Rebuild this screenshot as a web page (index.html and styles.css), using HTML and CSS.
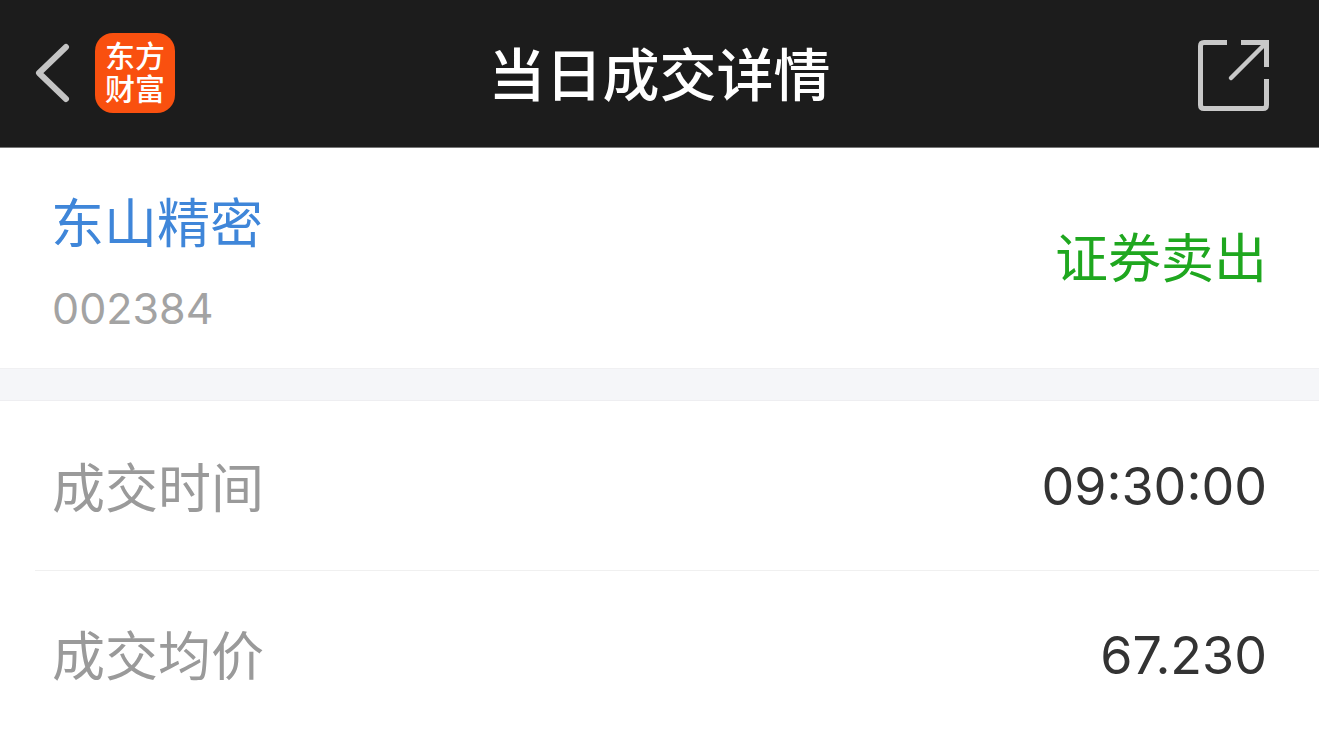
FILE: index.html
```html
<!DOCTYPE html>
<html>
<head>
    <meta charset="UTF-8">
    <meta name="viewport" content="width=device-width, initial-scale=1.0">
    <title>当日成交详情</title>
    <link rel="stylesheet" href="styles.css">
</head>
<body>
    <div class="topbar">
        <div class="topbar-left">
            <svg class="back" width="36" height="60" viewBox="0 0 36 60">
                <path d="M32 4 L5 30 L32 56" fill="none" stroke="#c4c4c4" stroke-width="6" stroke-linecap="round" stroke-linejoin="round"/>
            </svg>
            <div class="logo">
                <span>东方</span>
                <span>财富</span>
            </div>
        </div>
        <div class="title">当日成交详情</div>
        <svg class="share" width="71" height="71" viewBox="0 0 71 71">
            <path d="M29 2.5 H6 Q2.5 2.5 2.5 6 V65 Q2.5 68.5 6 68.5 H65 Q68.5 68.5 68.5 65 V39" fill="none" stroke="#c8c8c8" stroke-width="5"/>
            <path d="M43 2.5 H68.5 V27" fill="none" stroke="#c8c8c8" stroke-width="5"/>
            <path d="M67 4 L33 38" fill="none" stroke="#c8c8c8" stroke-width="4.5" stroke-linecap="round"/>
        </svg>
    </div>

    <div class="stock">
        <div class="stock-info">
            <div class="stock-name">东山精密</div>
            <div class="stock-code">002384</div>
        </div>
        <div class="stock-side">证券卖出</div>
    </div>

    <div class="gap"></div>

    <div class="rows">
        <div class="row">
            <span class="label">成交时间</span>
            <span class="value">09:30:00</span>
        </div>
        <div class="row">
            <span class="label">成交均价</span>
            <span class="value">67.230</span>
        </div>
    </div>
</body>
</html>
```

FILE: styles.css
```css
body {
    margin: 0;
    height: 736px;
    overflow: hidden;
    background: #fff;
    font-family: "Liberation Sans", "Noto Sans CJK SC", sans-serif;
}

.topbar {
    height: 148px;
    background: #1c1c1c;
    border-bottom: 1px solid #777;
    box-sizing: border-box;
    display: flex;
    align-items: center;
    justify-content: space-between;
    padding: 0 50px 2px 34px;
    position: relative;
}

.topbar-left {
    display: flex;
    align-items: center;
    gap: 25px;
}

.share {
    margin-top: 6px;
}

.logo {
    width: 80px;
    height: 80px;
    border-radius: 18px;
    background: #f9500f;
    color: #fff;
    font-size: 30px;
    font-weight: 500;
    line-height: 33px;
    display: flex;
    flex-direction: column;
    align-items: center;
    justify-content: center;
}

.logo span {
    display: block;
}

.title {
    position: absolute;
    left: 0;
    right: 0;
    margin-bottom: 4px;
    text-align: center;
    color: #fff;
    font-size: 57px;
    font-weight: 500;
}

.stock {
    height: 220px;
    box-sizing: border-box;
    display: flex;
    align-items: center;
    justify-content: space-between;
    padding: 0 52px;
}

.stock-info {
    padding-top: 12px;
}

.stock-name {
    color: #3f86d9;
    font-size: 53px;
    line-height: 60px;
    margin-left: -1px;
}

.stock-code {
    color: #a3a3a3;
    font-family: Inter, "Liberation Sans", sans-serif;
    font-size: 43px;
    line-height: 50px;
    margin-top: 28px;
}

.stock-side {
    color: #1fa71f;
    font-size: 53px;
    margin-bottom: 6px;
}

.gap {
    height: 31px;
    background: #f5f6f9;
    border-top: 1px solid #f0f0f2;
    border-bottom: 1px solid #eeeef1;
}

.rows {
    padding-left: 35px;
}

.row {
    height: 170px;
    box-sizing: border-box;
    border-bottom: 1px solid #f0f0f0;
    display: flex;
    align-items: center;
    justify-content: space-between;
    padding: 0 52px 2px 17px;
}

.row + .row {
    padding-bottom: 5px;
}

.label {
    color: #9a9a9a;
    font-size: 53px;
}

.value {
    color: #333;
    font-family: Inter, "Liberation Sans", sans-serif;
    font-size: 52px;
    margin-top: 4px;
}
```
